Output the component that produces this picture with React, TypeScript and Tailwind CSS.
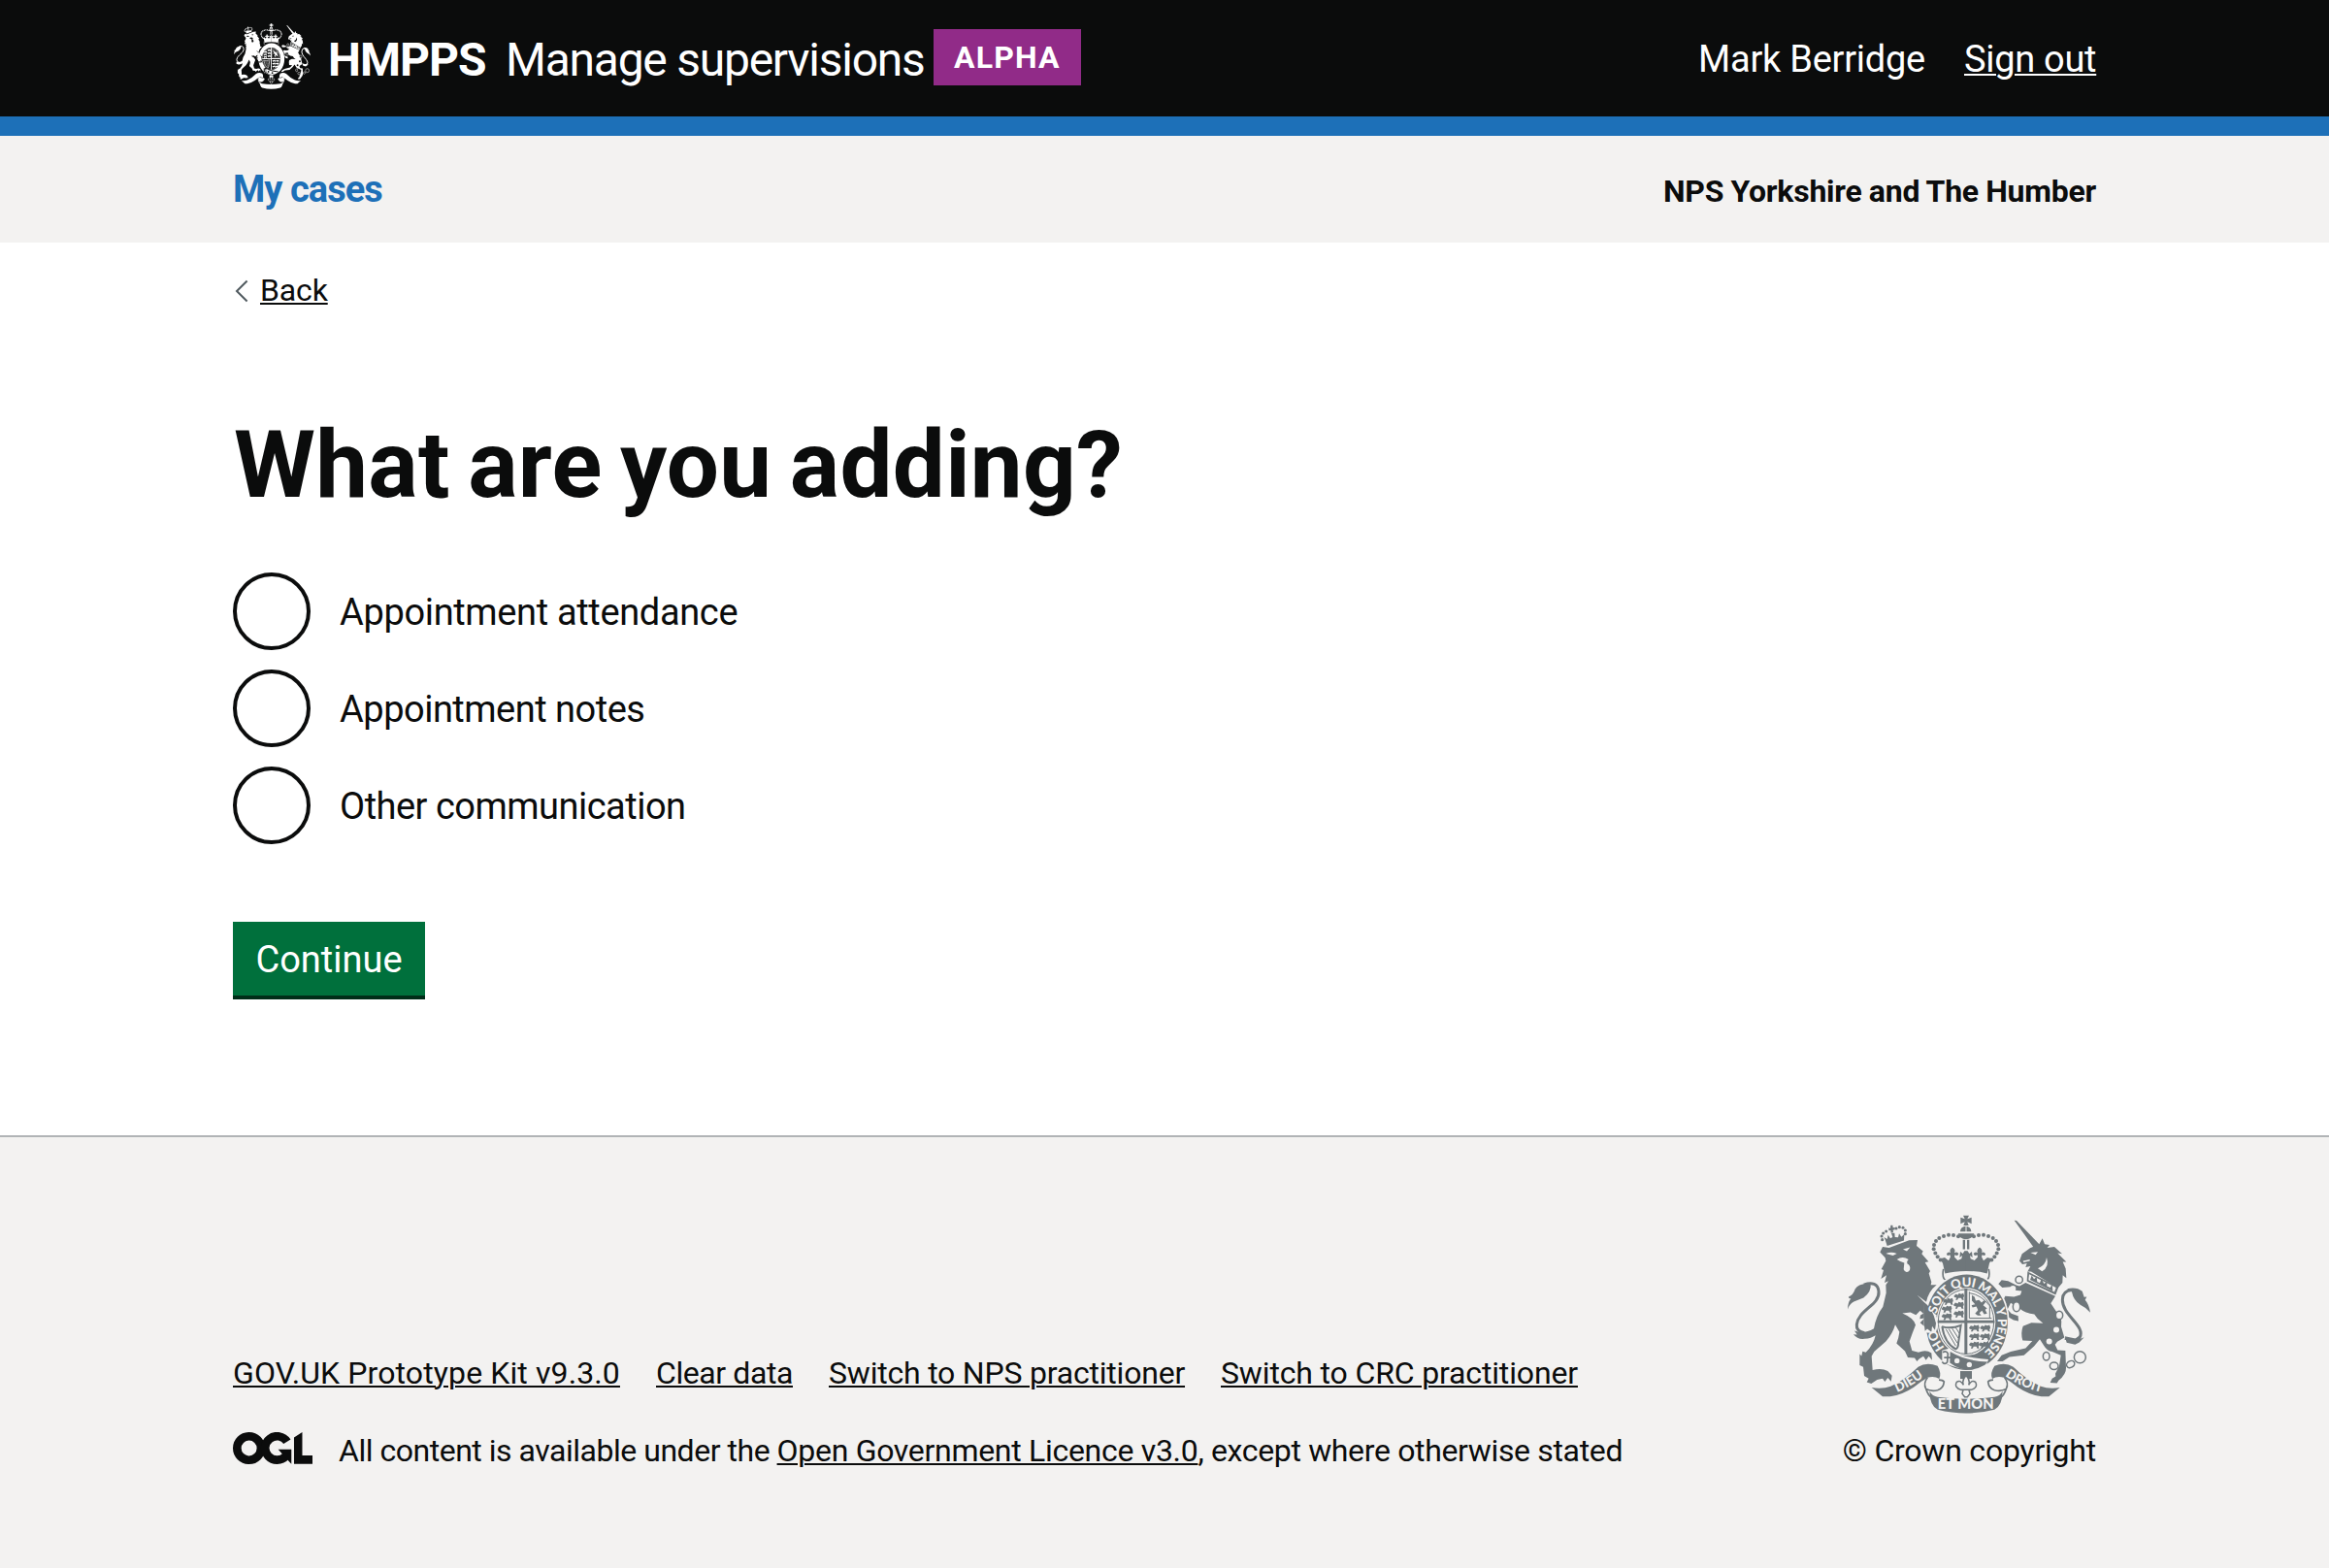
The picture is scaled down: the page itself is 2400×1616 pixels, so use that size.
type CrestProps = { ink: string; ground: string; className: string; lettered?: boolean };

const pearls = [
  [414, 131], [399, 127], [384, 126], [369, 130], [355, 136], [345, 145], [339, 157], [338, 170], [343, 183], [350, 194], [359, 204],
];

const beast = "M0 8 L6 2 L14 4 L17 0 L24 2 L31 0 L34 7 L31 13 L33 18 L27 18 L24 13 L15 13 L12 18 L6 18 L9 12 L3 11 Z";

function HalfCrown({ ink }: { ink: string }) {
  return (
    <g fill={ink}>
      {pearls.map(([x, y]) => (
        <circle key={`${x}-${y}`} cx={x} cy={y} r="6" />
      ))}
      <path d="M366 214 L358 200 L372 196 L384 206 L390 194 L388 188 Q378 194 378 184 Q384 176 390 182 Q385 172 396 165 Q407 172 402 182 Q410 176 415 184 Q413 194 403 188 L402 195 L412 205 L424 200 L426 190 L418 196 L420 178 L428 184 L433 176 L438.5 176 V238 Q400 238 373 246 Z" />
    </g>
  );
}

function Crest({ ink, ground, className, lettered }: CrestProps) {
  return (
    <svg viewBox="72 64 750 616" preserveAspectRatio="none" className={className} aria-hidden="true">
      {/* Lion's crown */}
      <g fill={ink}>
        <path d="M188 141 L184 133 L194 139 L197 126 L204 137 L211 133 L207 121 L217 120 L218 133 L228 134 L231 122 L238 132 L247 124 L246 144 L194 160 Z" />
        <path d="M199 104 L204 106 L205 96 L211 96 L212 104 L218 103 L218 110 L212 111 L213 119 L206 120 L205 112 L199 113Z" />
        {[[179, 141], [177, 130], [182, 121], [191, 115], [222, 106], [232, 102], [243, 104], [250, 112], [250, 123]].map(([x, y]) => (
          <circle key={x + y * 1000} cx={x} cy={y} r="4.6" />
        ))}
      </g>
      {/* Lion */}
      <path
        fill={ink}
        d="M172 180 L180 163 L200 166 L262 143 L288 142 L285 160 L305 177 L301 185 L322 209 L311 211 L327 238 L323 246 L331 272 L329 281 L347 281 Q322 300 315 334 L287 313 L316 343 Q337 360 345 402 L341 422 L332 409 L331 428 L318 418 L311 426 L311 411 L296 398 L310 384 L295 386 L297 375 L306 370 L296 361 L283 374 L266 366 L241 369 Q277 384 282 405 Q272 430 263 456 L271 485 L291 490 Q314 480 331 492 L333 514 L323 502 L314 514 L306 502 L293 510 L286 518 L279 507 L258 506 L249 486 L223 462 Q230 445 232 427 L219 404 Q211 432 190 456 L154 488 L146 502 L149 545 Q177 537 196 548 L209 562 L206 580 L196 569 L187 581 L180 571 L163 575 L145 587 L131 582 L137 571 L123 563 L120 535 L109 530 L109 495 L115 501 L118 487 L128 490 Q152 466 158 437 Q145 446 124 448 Q103 451 90 434 L101 435 L93 423 Q122 434 153 416 Q160 377 181 349 L191 306 L190 281 L198 269 L186 274 L192 251 L175 262 L183 235 L176 232 L190 207 L188 197 Z"
      />
      <path fill="none" stroke={ink} strokeWidth="9" d="M124 430 Q98 425 100 404 C104 359 172 343 168 302 C166 277 147 272 122 281" />
      <path fill={ink} d="M72 357 Q72 336 82 323 Q74 325 75 318 Q89 313 95 294 Q106 275 143 279 Q146 302 121 321 Q106 327 91 333 Q76 342 72 357Z" />
      <path fill={ground} d="M190 184 Q206 177 224 184 L212 190 Z M243 171 L265 165 L255 177 Z M224 202 Q242 190 260 202 Q253 208 256 215 Q268 222 264 235 Q252 249 245 233 L247 213 Q234 208 224 202Z" />

      {/* Unicorn */}
      <path fill={ink} d="M587 81 L594 82 L667 158 L650 169 Z" />
      <path
        fill={ink}
        d="M603 207 L611 185 L636 167 L664 155 L674 137 L681 155 L696 157 L689 166 L711 163 L735 185 L721 183 L748 210 L737 210 L746 231 L748 260 L737 251 L736 274 L722 291 L706 281 L639 240 L628 240 L637 223 L622 226 L626 214 L612 217 Z"
      />
      <path fill={ground} d="M637 181 L660 179 L653 188 Z M614 207 L635 202 L635 207 L616 211 Z M660 230 Q684 220 687 196 Q697 224 673 239Z" />
      <path fill={ink} d="M628 240 L724 288 L715 312 L626 270Z" />
      <path fill={ground} d="M633 248 L716 289 L711 303 L631 266Z" />
      <path fill={ink} d="M636 265 L641 252 L648 263 L656 256 L658 271 L666 275 L671 262 L679 277 L688 271 L688 285 L698 289 L704 279 L706 301Z" />
      <path
        fill={ink}
        d="M622 274 L714 316 L700 338 L716 362 Q737 378 732 410 L742 444 L720 457 L713 466 L721 483 L745 485 L747 538 Q748 558 724 577 L719 585 L698 584 L704 571 L715 564 L714 556 L726 532 L731 499 L704 488 Q689 487 679 470 L666 449 L648 471 L617 499 L572 504 L551 518 L534 518 L548 499 L576 488 L622 477 L643 455 L613 453 Q606 431 614 409 L640 398 L676 400 Q658 388 649 372 Q622 369 602 353 L576 337 L566 357 L578 370 L599 377 L600 393 L585 390 L568 380 L553 357 L548 340 L559 316 L586 318 L606 312 L610 300 L590 298 L576 287 L550 289 L538 278 L548 266 L568 269 L593 282 L603 285Z"
      />
      <path fill="none" stroke={ink} strokeWidth="9" d="M744 446 Q775 461 789 445 C810 408 735 376 736 327 Q736 300 764 297" />
      <path fill={ink} d="M750 293 Q780 286 797 301 L803 319 L811 318 L806 328 Q818 341 822 367 Q807 350 791 343 Q770 329 765 303Z M744 440 L776 447 L796 432 L788 449 L803 443 L788 459 L775 466 L749 460Z" />
      {[[717, 420], [695, 456], [583, 292]].map(([x, y]) => (
        <circle key={x} cx={x} cy={y} r="9" fill={ground} />
      ))}
      <g fill="none" stroke={ink} strokeWidth="4.5">
        <circle cx="602" cy="265" r="11" />
        <ellipse cx="594" cy="349" rx="11" ry="15" fill={ground} />
        <ellipse cx="726" cy="375" rx="11" ry="13" fill={ground} />
        <ellipse cx="686" cy="502" rx="10" ry="13" />
        <ellipse cx="710" cy="532" rx="13" ry="11" />
        <ellipse cx="761" cy="527" rx="13" ry="10" transform="rotate(-30 761 527)" />
        <circle cx="790" cy="505" r="18" />
      </g>

      {/* Royal crown */}
      <HalfCrown ink={ink} />
      <g transform="translate(876 0) scale(-1 1)">
        <HalfCrown ink={ink} />
      </g>
      <g fill={ink}>
        <path d="M429 66 H447 L442 77 L455 72 V92 L442 86 L446 97 H430 L434 86 L421 92 V72 L434 77Z" />
        <path d="M420 116 A17 17 0 0 1 454 116Z M413 122 H463 Q458 139 438 140 Q418 139 413 122Z M428 141 h7 v30 h-7Z M441 141 h7 v30 h-7Z" />
      </g>
      <path fill="none" stroke={ink} strokeWidth="5" d="M368 232 Q362 264 378 267 Q438 240 498 267 Q514 264 508 232" />
      <path stroke={ground} strokeWidth="3" d="M438 98 V119" />

      {/* Garter */}
      <ellipse cx="440" cy="397" rx="132" ry="153" fill={ground} />
      <ellipse cx="440" cy="397" rx="127" ry="148" fill={ink} />
      <ellipse cx="438" cy="395" rx="91" ry="105" fill={ground} />
      <ellipse cx="438" cy="395" rx="86" ry="100" fill="none" stroke={ink} strokeWidth="3" />
      {/* Lion's paw over the garter */}
      <path fill={ground} d="M308 340 L346 374 L352 402 L345 428 L326 430 L308 428 Z" />
      <path fill={ink} d="M306 334 Q334 350 345 400 L342 421 L333 409 L331 427 L318 417 L311 424 L308 400Z" />
      {/* Quarterings */}
      <g fill={ink}>
        <path d="M433 292 h9 v204 h-9Z M350 391 h176 v8 h-176Z" />
        {[[366, 322], [362, 346], [362, 369], [400, 307], [399, 334], [399, 361]].map(([x, y]) => (
          <path key={`${x},${y}`} d={beast} transform={`translate(${x} ${y}) scale(0.95 1.15)`} />
        ))}
        {[[447, 405], [447, 431], [447, 457], [481, 405], [480, 431], [477, 457]].map(([x, y]) => (
          <path key={`${x},${y}`} d={beast} transform={`translate(${x} ${y}) scale(0.95 1.15)`} />
        ))}
        <path d="M456 313 L464 318 L468 330 L478 328 L486 336 L493 329 L499 334 L491 344 L503 354 L497 358 L503 370 L494 372 L487 361 L479 368 L485 376 L474 376 L466 370 L475 359 L470 348 L458 351 L455 344 L466 341 L456 330Z" />
      </g>
      <g fill="none" stroke={ink} strokeWidth="3">
        <path d="M448 302 V384 H517 M448 306 Q486 312 511 346 V384" />
        <path strokeWidth="6" d="M363 410 Q392 419 422 406 L414 462 Q414 476 406 480 Q372 462 364 410" />
        <path d="M376 418 L406 470 M385 418 L411 461 M395 416 L414 446 M406 413 L417 431" />
      </g>
      {/* Buckle and strap */}
      <path fill={ground} d="M364 484 L388 477 Q394 490 436 502 Q478 510 507 512 L498 540 Q430 552 364 520Z" />
      <path fill={ink} d="M389 488 Q438 518 505 519 L496 529 Q440 562 388 522Z" />
      <path fill="none" stroke={ink} strokeWidth="5" d="M366 490 Q377 483 382 494 L380 520 Q372 530 364 519 M370 506 H394" />
      <g fill={ground}>
        <circle cx="410" cy="516" r="8" />
        <circle cx="448" cy="528" r="8" />
      </g>

      {/* Pendant */}
      <path fill={ink} d="M420 548 H456 V572 H420Z" />
      <path
        fill={ground}
        stroke={ink}
        strokeWidth="4.5"
        d="M438 561 Q452 576 446 591 Q456 573 467 582 Q476 598 454 606 L447 607 L450 618 L442 628 H434 L426 618 L429 607 L422 606 Q400 598 409 582 Q420 573 430 591 Q424 576 438 561Z M421 606 H455"
      />

      {/* Scroll */}
      <g fill={ink}>
        <path d="M146 599 Q180 604 205 595 Q246 578 290 535 Q316 518 350 532 Q363 555 355 572 Q340 562 319 568 Q298 580 276 598 Q240 622 203 627 H180Z" />
        <path d="M728 599 Q694 604 669 595 Q628 578 584 535 Q558 518 526 532 Q511 555 519 572 Q534 562 555 568 Q576 580 598 598 Q634 622 671 627 H694Z" />
        <path d="M325 610 Q334 626 350 628 Q438 640 526 628 Q542 626 551 610 Q550 655 526 667 Q438 690 350 667 Q326 655 325 610Z" />
      </g>
      <g fill={lettered ? "none" : ink} stroke={ink} strokeWidth="5">
        <path d="M319 568 Q305 585 314 603 Q330 612 350 607 Q368 601 370 581 Q366 575 354 575 M314 603 Q322 626 332 630" />
        <path d="M557 568 Q571 585 562 603 Q546 612 526 607 Q508 601 506 581 Q510 575 522 575 M562 603 Q554 626 544 630" />
      </g>

      {lettered && (
        <g fill={ground} className="font-[Lato] font-black">
          <defs>
            <path id="garter" d="M440 508 A96 111 0 0 1 440 286 A96 111 0 0 1 440 508" />
            <path id="dieu" d="M212 618 Q265 600 318 557" />
            <path id="droit" d="M549 556 Q606 600 682 616" />
          </defs>
          <g fontSize="39">
            <text><textPath href="#garter" startOffset="12%">HO</textPath></text>
            <text><textPath href="#garter" startOffset="29%" textLength="404">SOIT QUI MAL Y PENSE</textPath></text>
          </g>
          <g fontSize="40" textAnchor="middle">
            <text><textPath href="#dieu" startOffset="50%">DIEU</textPath></text>
            <text><textPath href="#droit" startOffset="50%">DROIT</textPath></text>
            <text x="437" y="666" fontSize="44" textLength="174">ET MON</text>
          </g>
        </g>
      )}
    </svg>
  );
}

function OglLogo() {
  return (
    <svg viewBox="0 0 483 196" preserveAspectRatio="none" className="mt-px h-[33px] w-[82px] shrink-0" aria-label="Open Government Licence">
      <g fill="none" stroke="#0b0c0c" strokeWidth="51">
        <circle cx="98" cy="98" r="72.5" />
        <path d="M329 58 A72.5 72.5 0 1 0 322 146" />
      </g>
      <path fill="#0b0c0c" d="M275 106 H355 V194 L330 168 L300 133Z M371 32 L421 0 V143 H483 V194 H371Z" />
    </svg>
  );
}

const options = [
  { label: "Appointment attendance", tracking: "tracking-[-0.35px]" },
  { label: "Appointment notes", tracking: "tracking-[-0.5px]" },
  { label: "Other communication", tracking: "tracking-[-0.51px]" },
];

const footerLinks = [
  { label: "GOV.UK Prototype Kit v9.3.0", box: "w-[399px] tracking-[0.11px]" },
  { label: "Clear data", box: "w-[141px] tracking-[-0.41px]" },
  { label: "Switch to NPS practitioner", box: "w-[367px] tracking-[-0.21px]" },
  { label: "Switch to CRC practitioner", box: "w-[368px] tracking-[-0.15px]" },
];

export default function App() {
  return (
    <div className="flex min-h-[1616px] flex-col bg-white font-[Roboto,sans-serif] text-[#0b0c0c]">
      <header className="bg-[#0b0c0c] text-white">
        <div className="mx-auto flex h-[120px] w-[1920px] items-start justify-between">
          <div className="flex items-start whitespace-nowrap text-[48px] leading-[48px]">
            <Crest ink="#ffffff" ground="#0b0c0c" className="mt-6 ml-px h-[68px] w-[79px]" />
            <span className="mt-[38px] ml-[18px] w-[183px] font-bold tracking-[-0.95px]">HMPPS</span>
            <span className="mt-[38px] w-[441px] tracking-[-1.25px]">Manage supervisions</span>
            <strong className="mt-[30px] h-[58px] w-[152px] bg-[#912b88] pl-[21px] text-[32px] leading-[58px] font-bold tracking-[1.2px]">
              ALPHA
            </strong>
          </div>
          <nav className="mt-[41px] flex gap-10 whitespace-nowrap text-[38px] leading-[40px]">
            <span className="tracking-[-0.25px]">Mark Berridge</span>
            <a href="#" className="w-[136px] tracking-[-0.3px] underline decoration-2 underline-offset-2">
              Sign out
            </a>
          </nav>
        </div>
        <div className="h-5 bg-[#1d70b8]" />
      </header>

      <div className="h-[110px] bg-[#f3f2f1]">
        <div className="mx-auto flex w-[1920px] items-start justify-between font-bold leading-[40px]">
          <a href="#" className="mt-[35px] text-[38px] tracking-[-0.95px] text-[#1d70b8]">
            My cases
          </a>
          <span className="mt-[37px] text-[32px] tracking-[-0.23px] [word-spacing:-0.5px]">NPS Yorkshire and The Humber</span>
        </div>
      </div>

      <main className="mx-auto w-[1920px]">
        <a href="#" className="mt-[29px] flex w-fit items-center">
          <svg viewBox="0 0 28 40" className="h-10 w-7" fill="none" stroke="#505a5f" strokeWidth="2">
            <path d="M14.6 10.5 L4 21 L14.6 31.5" />
          </svg>
          <span className="text-[32px] leading-[40px] tracking-[-0.15px] underline decoration-2 underline-offset-2">Back</span>
        </a>
        <h1 className="mt-[110px] pl-px text-[96px] leading-[100px] font-bold tracking-[0.3px] [word-spacing:-5.8px]">
          What are you adding?
        </h1>
        <div className="mt-[61px] flex flex-col gap-5">
          {options.map((o) => (
            <label key={o.label} className="flex h-20 items-center gap-[30px] text-[38px] leading-[78px]">
              <input type="radio" name="entry" className="size-20 shrink-0 appearance-none rounded-full border-4 border-[#0b0c0c]" />
              <span className={`pt-0.5 ${o.tracking}`}>{o.label}</span>
            </label>
          ))}
        </div>
        <button className="mt-20 h-20 w-[198px] border-b-4 border-[#002d18] bg-[#00703c] pt-0.5 text-[38px] leading-[74px] text-white">
          Continue
        </button>
      </main>

      <footer className="mt-[140px] flex-1 border-t-2 border-[#b1b4b6] bg-[#f3f2f1] pt-20 text-[32px] leading-[40px]">
        <div className="mx-auto flex w-[1920px] items-end justify-between whitespace-nowrap">
          <div className="flex flex-col gap-10">
            <div className="flex gap-[37px]">
              {footerLinks.map((l) => (
                <a key={l.label} href="#" className={`underline decoration-2 underline-offset-2 ${l.box}`}>
                  {l.label}
                </a>
              ))}
            </div>
            <div className="flex items-start gap-[27px]">
              <OglLogo />
              <p className="tracking-[-0.35px]">
                <span className="tracking-[-0.48px]">All content is available under the </span>
                <a href="#" className="tracking-[-0.3px] underline decoration-2 underline-offset-2">
                  Open Government Licence v3.0
                </a>
                , except where otherwise stated
              </p>
            </div>
          </div>
          <div className="flex flex-col items-end gap-[18px]">
            <Crest ink="#6f777b" ground="#f3f2f1" className="mr-1.5 h-[205px] w-[250px]" lettered />
            <span className="tracking-[-0.22px]">© Crown copyright</span>
          </div>
        </div>
      </footer>
    </div>
  );
}
